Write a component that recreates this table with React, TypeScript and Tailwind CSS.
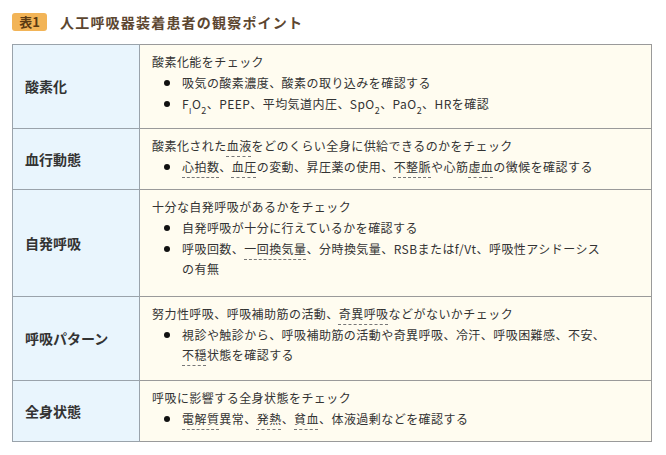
import React from 'react';

const U: React.FC<{ children: React.ReactNode }> = ({ children }) => (
  <span className="underline decoration-dashed decoration-[#777] decoration-1 underline-offset-[5px]">{children}</span>
);

type Row = {
  label: string;
  lead: React.ReactNode;
  items: React.ReactNode[];
  h: string;
};

const rows: Row[] = [
  {
    label: '酸素化',
    h: 'h-[84px]',
    lead: '酸素化能をチェック',
    items: [
      '吸気の酸素濃度、酸素の取り込みを確認する',
      <>
        F<sub className="text-[8px] align-[-3px]">I</sub>O<sub className="text-[9px] align-[-3px]">2</sub>、PEEP、平均気道内圧、SpO
        <sub className="text-[9px] align-[-3px]">2</sub>、PaO<sub className="text-[9px] align-[-3px]">2</sub>、HRを確認
      </>,
    ],
  },
  {
    label: '血行動態',
    h: 'h-[61px]',
    lead: (
      <>
        酸素化された<U>血液</U>をどのくらい全身に供給できるのかをチェック
      </>
    ),
    items: [
      <>
        <U>心拍数</U>、<U>血圧</U>の変動、昇圧薬の使用、<U>不整脈</U>や心筋<U>虚血</U>の徴候を確認する
      </>,
    ],
  },
  {
    label: '自発呼吸',
    h: 'h-[107px]',
    lead: '十分な自発呼吸があるかをチェック',
    items: [
      '自発呼吸が十分に行えているかを確認する',
      <>
        呼吸回数、<U>一回換気量</U>、分時換気量、RSBまたはf/Vt、呼吸性アシドーシス
        <br />
        の有無
      </>,
    ],
  },
  {
    label: '呼吸パターン',
    h: 'h-[84px]',
    lead: (
      <>
        努力性呼吸、呼吸補助筋の活動、<U>奇異呼吸</U>などがないかチェック
      </>
    ),
    items: [
      <>
        視診や触診から、呼吸補助筋の活動や奇異呼吸、冷汗、呼吸困難感、不安、
        <br />
        <U>不穏</U>状態を確認する
      </>,
    ],
  },
  {
    label: '全身状態',
    h: 'h-[61px]',
    lead: '呼吸に影響する全身状態をチェック',
    items: [
      <>
        <U>電解質</U>異常、<U>発熱</U>、<U>貧血</U>、体液過剰などを確認する
      </>,
    ],
  },
];

export default function App() {
  return (
    <div
      className="w-[666px] h-[455px] bg-white pl-3 pt-[13px]"
      style={{ fontFamily: '"Noto Sans CJK JP", "Noto Sans", sans-serif' }}
    >
      <div className="flex items-center h-[18px]">
        <span className="w-[35px] h-[18px] rounded-[3px] bg-[#f2b457] text-[#5b3a12] text-[13px] font-bold leading-[18px] flex items-center justify-center">
          表1
        </span>
        <span className="ml-[13px] text-[14px] font-bold text-[#5c4630] tracking-[1.2px] leading-[18px]">
          人工呼吸器装着患者の観察ポイント
        </span>
      </div>

      <table className="mt-[13px] w-[640px] border-collapse border border-[#9a9a9a] text-[12px] text-[#333]">
        <tbody>
          {rows.map(r => (
            <tr key={r.label} className={r.h}>
              <td className="w-[127px] bg-[#e9f5fd] border border-[#9aa3ab] pl-[12px] align-middle text-[14px] font-bold text-[#333]">
                {r.label}
              </td>
              <td className="bg-[#fffcf0] border border-[#9a9a9a] align-top pt-[7px] pl-[12px] pr-[10px] leading-[20px] tracking-[0.45px]">
                <div>{r.lead}</div>
                <ul>
                  {r.items.map((it, i) => (
                    <li key={i} className="flex mt-[1px]">
                      <span className="w-[30px] shrink-0 flex justify-center pt-[7px]">
                        <span className="w-[6px] h-[6px] rounded-full bg-[#111]" />
                      </span>
                      <span className="flex-1 whitespace-nowrap">{it}</span>
                    </li>
                  ))}
                </ul>
              </td>
            </tr>
          ))}
        </tbody>
      </table>
    </div>
  );
}
